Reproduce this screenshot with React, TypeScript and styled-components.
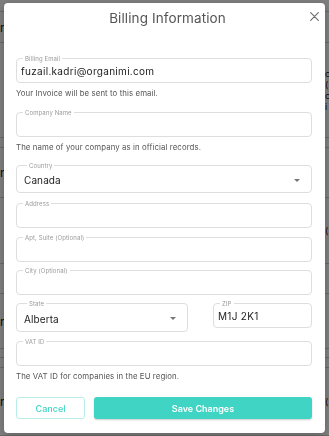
import React from "react";
import styled, { createGlobalStyle } from "styled-components";

const GlobalStyle = createGlobalStyle`
  html, body { margin: 0; padding: 0; }
  body {
    font-family: Inter, "Noto Sans", sans-serif;
    background: #ffffff;
    overflow: hidden;
  }
  * { box-sizing: border-box; }
`;

const TEAL = "#3fd4c3";

// page behind the modal
const bgRows = [
  { h: 12, left: "", right: "" },
  { h: 31, left: "n", right: "" },
  { h: 95, left: "", right: "c\n(\nc\ni" },
  { h: 10, left: "", right: "" },
  { h: 50, left: "n", right: "" },
  { h: 66, left: "", right: "(" },
  { h: 30, left: "", right: "" },
  { h: 55, left: "n", right: "" },
  { h: 9, left: "", right: "" },
  { h: 10, left: "", right: "" },
  { h: 68, left: "n", right: "(" },
];

type FieldProps = {
  label: string;
  value?: string;
  select?: boolean;
  tall?: boolean;
};

const Field: React.FC<FieldProps> = ({ label, value, select, tall }) => (
  <FieldBox $select={select} $tall={tall}>
    <FieldLabel $select={select}>{label}</FieldLabel>
    <FieldValue $select={select}>{value}</FieldValue>
    {select && <Caret />}
  </FieldBox>
);

const App: React.FC = () => {
  return (
    <>
      <GlobalStyle />
      <Page>
        {bgRows.map((r, i) => (
          <PageRow key={i} style={{ height: r.h }}>
            <span>{r.left}</span>
            <RightCell>{r.right}</RightCell>
          </PageRow>
        ))}
      </Page>
      <Overlay>
        <Modal>
          <Header>
            <span />
            <Title>Billing Information</Title>
            <CloseButton aria-label="Close">
              <svg width="9" height="9" viewBox="0 0 9 9">
                <path
                  d="M0.7 0.7 L8.3 8.3 M8.3 0.7 L0.7 8.3"
                  stroke="#6f6f6f"
                  strokeWidth="1.2"
                  strokeLinecap="round"
                />
              </svg>
            </CloseButton>
          </Header>
          <Body>
            <Group $mt={25}>
              <Field label="Billing Email" value="fuzail.kadri@organimi.com" />
              <Helper>Your Invoice will be sent to this email.</Helper>
            </Group>
            <Group $mt={14}>
              <Field label="Company Name" />
              <Helper>The name of your company as in official records.</Helper>
            </Group>
            <Group $mt={13}>
              <Field label="Country" value="Canada" select />
            </Group>
            <Group $mt={10}>
              <Field label="Address" />
            </Group>
            <Group $mt={9}>
              <Field label="Apt, Suite (Optional)" />
            </Group>
            <Group $mt={8}>
              <Field label="City (Optional)" />
            </Group>
            <SplitRow>
              <Field label="State" value="Alberta" select tall />
              <Field label="ZIP" value="M1J 2K1" />
            </SplitRow>
            <Group $mt={9}>
              <Field label="VAT ID" />
              <Helper $mt={5}>The VAT ID for companies in the EU region.</Helper>
            </Group>
            <Actions>
              <CancelButton>Cancel</CancelButton>
              <SaveButton>Save Changes</SaveButton>
            </Actions>
          </Body>
        </Modal>
      </Overlay>
    </>
  );
};

export default App;

const Page = styled.div`
  width: 100%;
  height: 436px;
  display: flex;
  flex-direction: column;
`;

const PageRow = styled.div`
  display: flex;
  justify-content: space-between;
  align-items: center;
  border-bottom: 1px solid #d2d2d2;
  font-size: 12px;
  color: #222;
`;

const RightCell = styled.span`
  white-space: pre;
  font-size: 9px;
  line-height: 11px;
  width: 4px;
  overflow: visible;
`;

const Overlay = styled.div`
  position: fixed;
  inset: 0;
  background: rgba(0, 0, 0, 0.5);
  padding: 3px 4px 3px 4px;
`;

const Modal = styled.div`
  width: 321px;
  height: 430px;
  background: #ffffff;
  border-radius: 4px;
  box-shadow: 0 2px 8px rgba(0, 0, 0, 0.25);
  display: flex;
  flex-direction: column;
`;

const Header = styled.div`
  height: 30px;
  display: grid;
  grid-template-columns: 1fr auto 1fr;
  align-items: start;
  padding: 7px 6px 0 12px;
`;

const Title = styled.h2`
  margin: 0;
  font-size: 13.5px;
  line-height: 16px;
  font-weight: 400;
  color: #555555;
  letter-spacing: 0.1px;
`;

const CloseButton = styled.button`
  justify-self: end;
  border: none;
  background: none;
  padding: 0;
  margin-top: 2px;
  width: 9px;
  height: 9px;
  display: flex;
  cursor: pointer;
`;

const Body = styled.div`
  padding: 0 13px 0 12px;
  display: flex;
  flex-direction: column;
`;

const Group = styled.div<{ $mt: number }>`
  display: flex;
  flex-direction: column;
  margin-top: ${(p) => p.$mt}px;
`;

const FieldBox = styled.div<{ $select?: boolean; $tall?: boolean }>`
  position: relative;
  height: ${(p) => (p.$tall ? 29 : p.$select ? 28 : 25)}px;
  border: 1px solid #dedede;
  border-radius: 4px;
  display: flex;
  align-items: center;
  padding: ${(p) => (p.$select ? "2px 0 0 7px" : "1px 0 0 4px")};
`;

const FieldLabel = styled.span<{ $select?: boolean }>`
  position: absolute;
  top: -4px;
  left: ${(p) => (p.$select ? 10 : 6)}px;
  padding: 0 2px;
  background: #ffffff;
  font-size: 6px;
  line-height: 7px;
  color: #9a9a9a;
  letter-spacing: 0.1px;
`;

const FieldValue = styled.span<{ $select?: boolean }>`
  font-size: 10px;
  letter-spacing: ${(p) => (p.$select ? 0.1 : 0.3)}px;
  color: #222222;
  flex: 1;
`;

const Caret = styled.span`
  width: 0;
  height: 0;
  margin-right: 11px;
  border-left: 3px solid transparent;
  border-right: 3px solid transparent;
  border-top: 3px solid #777777;
`;

const Helper = styled.p<{ $mt?: number }>`
  margin: ${(p) => p.$mt ?? 5}px 0 0;
  font-size: 7.8px;
  line-height: 10px;
  letter-spacing: 0.1px;
  color: #555555;
`;

const SplitRow = styled.div`
  margin-top: 8px;
  display: grid;
  grid-template-columns: 172px 99px;
  justify-content: space-between;
  align-items: start;
`;

const Actions = styled.div`
  margin-top: 16px;
  display: grid;
  grid-template-columns: 69px 1fr;
  gap: 9px;
`;

const BaseButton = styled.button`
  height: 22px;
  border-radius: 3px;
  font-family: Inter, "Noto Sans", sans-serif;
  font-size: 9px;
  font-weight: 500;
  cursor: pointer;
`;

const CancelButton = styled(BaseButton)`
  background: #ffffff;
  border: 1px solid #b9eee8;
  color: ${TEAL};
`;

const SaveButton = styled(BaseButton)`
  background: ${TEAL};
  border: none;
  color: #ffffff;
  font-weight: 600;
  box-shadow: 0 1px 2px rgba(0, 0, 0, 0.2);
`;
